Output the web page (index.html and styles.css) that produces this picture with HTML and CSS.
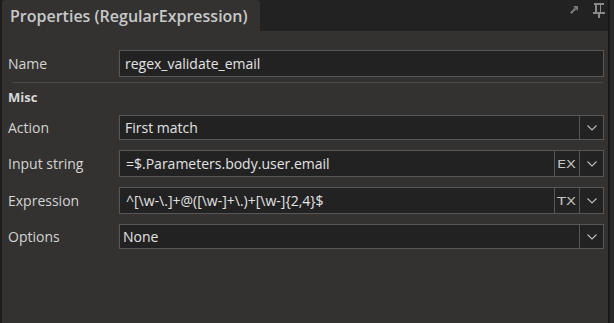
FILE: index.html
```html
<!DOCTYPE html>
<html>
<head>
<meta charset="utf-8">
<link rel="stylesheet" href="styles.css">
</head>
<body>
<div class="window">
  <div class="panel">
    <div class="header">
      <div class="tab">Properties (RegularExpression)</div>
      <div class="tools">
        <svg class="ico-float" width="8" height="8" viewBox="0 0 8 8"><polygon points="3,0 8,0 8,5" fill="#7a7a7a"/><line x1="0.8" y1="7.2" x2="5.5" y2="2.5" stroke="#7a7a7a" stroke-width="2.2"/></svg>
        <svg class="ico-pin" width="12" height="15" viewBox="0 0 12 15"><rect x="1" y="0" width="10" height="2" fill="#8a8a8a"/><rect x="2" y="2" width="2" height="8" fill="#8a8a8a"/><rect x="7" y="2" width="1" height="8" fill="#8a8a8a"/><rect x="0" y="9" width="12" height="2" fill="#8a8a8a"/><rect x="5" y="11" width="2" height="4" fill="#8a8a8a"/></svg>
      </div>
    </div>
    <div class="body">
      <div class="row">
        <div class="label">Name</div>
        <div class="field tall"><span class="value">regex_validate_email</span></div>
      </div>
      <div class="sep"></div>
      <div class="category">Misc</div>
      <div class="props">
        <div class="row">
          <div class="label">Action</div>
          <div class="field"><span class="value">First match</span><div class="btn drop"><svg width="10" height="6" viewBox="0 0 10 6"><path d="M0.5 0.5 L5 5 L9.5 0.5" fill="none" stroke="#bdbdbd" stroke-width="1.1"/></svg></div></div>
        </div>
        <div class="row">
          <div class="label">Input string</div>
          <div class="field tall"><span class="value v-mono">=$.Parameters.body.user.email</span><div class="btn mode"><svg width="20" height="9" viewBox="0 0 20 9"><text x="0" y="8.5" textLength="19" lengthAdjust="spacingAndGlyphs" class="mode-text">EX</text></svg></div><div class="btn drop"><svg width="10" height="6" viewBox="0 0 10 6"><path d="M0.5 0.5 L5 5 L9.5 0.5" fill="none" stroke="#bdbdbd" stroke-width="1.1"/></svg></div></div>
        </div>
        <div class="row">
          <div class="label">Expression</div>
          <div class="field tall"><span class="value v-mono">^[\w-\.]+@([\w-]+\.)+[\w-]{2,4}$</span><div class="btn mode"><svg width="20" height="9" viewBox="0 0 20 9"><text x="0" y="8.5" textLength="19" lengthAdjust="spacingAndGlyphs" class="mode-text">TX</text></svg></div><div class="btn drop"><svg width="10" height="6" viewBox="0 0 10 6"><path d="M0.5 0.5 L5 5 L9.5 0.5" fill="none" stroke="#bdbdbd" stroke-width="1.1"/></svg></div></div>
        </div>
        <div class="row">
          <div class="label">Options</div>
          <div class="field"><span class="value v-options">None</span><div class="btn drop"><svg width="10" height="6" viewBox="0 0 10 6"><path d="M0.5 0.5 L5 5 L9.5 0.5" fill="none" stroke="#bdbdbd" stroke-width="1.1"/></svg></div></div>
        </div>
      </div>
    </div>
  </div>
</div>
</body>
</html>
```

FILE: styles.css
```css
html, body {
  margin: 0;
  padding: 0;
}
body {
  background: #222222;
  font-family: "Open Sans", "Noto Sans", sans-serif;
}
.window {
  width: 614px;
  height: 323px;
  box-sizing: border-box;
  border-left: 2px solid #1c1c1c;
  border-right: 4px solid #2a2a2a;
  display: flex;
}
.panel {
  flex: 1;
  display: flex;
  flex-direction: column;
  border-right: 2px solid #1a1a1a;
}
.header {
  height: 31px;
  background: #222222;
  display: flex;
  align-items: stretch;
}
.tab {
  width: 250px;
  padding-left: 8px;
  background: #333230;
  border-radius: 4px 4px 0 0;
  color: #c9c9c9;
  font-weight: 600;
  font-size: 16px;
  line-height: 32px;
  white-space: nowrap;
}
.tools {
  margin-left: auto;
  display: flex;
  align-items: flex-start;
  padding-right: 3px;
}
.ico-float {
  margin-top: 6px;
  margin-right: 15px;
}
.ico-pin {
  margin-top: 3px;
}
.body {
  flex: 1;
  background: #333230;
  padding: 19px 4px 0 6px;
}
.row {
  display: grid;
  grid-template-columns: 111px 1fr;
  align-items: center;
}
.label {
  color: #d4d4d4;
  font-size: 14px;
}
.field {
  height: 25px;
  box-sizing: border-box;
  border: 1px solid #575757;
  background: #222222;
  display: flex;
  align-items: center;
}
.field.tall {
  height: 27px;
}
.value {
  flex: 1;
  padding-left: 5px;
  color: #e2e2e2;
  font-size: 14px;
  white-space: nowrap;
  overflow: hidden;
}
.v-mono {
  padding-left: 6px;
}
.v-options {
  padding-left: 3px;
}
.btn {
  align-self: stretch;
  border-left: 1px solid #575757;
  display: flex;
  align-items: center;
  justify-content: center;
}
.btn.drop {
  width: 23px;
}
.btn.mode {
  width: 24px;
}
.mode-text {
  font-family: "DejaVu Sans", sans-serif;
  font-size: 10px;
  fill: #c4c4c4;
}
.sep {
  height: 1px;
  background: #4a4a4a;
  margin: 5px 1px 0 4px;
}
.category {
  height: 27px;
  padding-top: 5px;
  line-height: 18px;
  font-size: 13px;
  font-weight: 700;
  color: #d8d8d8;
}
.props {
  display: flex;
  flex-direction: column;
  gap: 10px;
}
```
